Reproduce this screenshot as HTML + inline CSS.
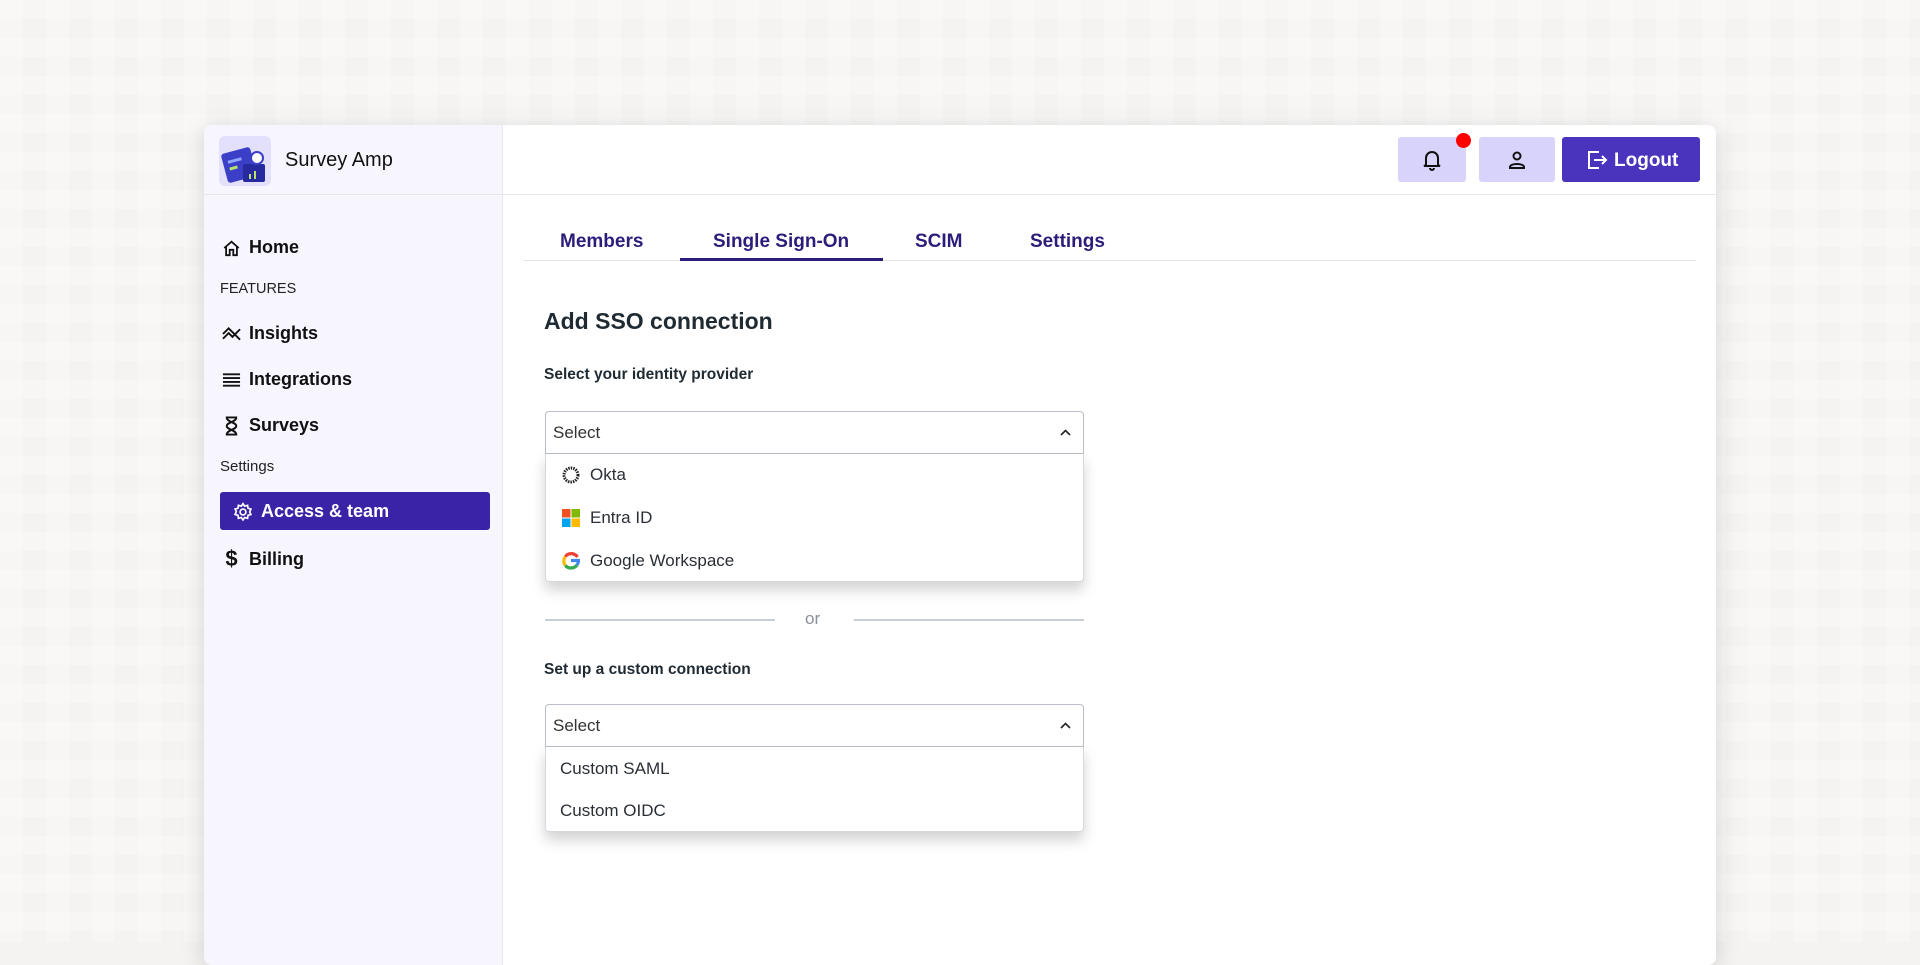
<!DOCTYPE html>
<html><head><meta charset="utf-8"><style>
*{box-sizing:border-box;margin:0;padding:0}
body{width:1920px;height:942px;overflow:hidden;background:#f5f3f1;font-family:"Liberation Sans",sans-serif;position:relative}
.bgrid{position:absolute;inset:0;background-image:linear-gradient(90deg,rgba(255,255,255,.5) 50%,transparent 50%),linear-gradient(rgba(255,255,255,.4) 50%,transparent 50%);background-size:46px 46px,38px 38px;opacity:.6}
.card{position:absolute;left:204px;top:125px;width:1512px;height:840px;background:#fff;border-radius:8px;box-shadow:0 4px 24px rgba(0,0,0,.15);overflow:hidden}
.side{position:absolute;left:0;top:0;width:299px;height:100%;background:#f7f6fe;border-right:1px solid #e8e6f2}
.hdr{position:absolute;left:0;top:69px;width:100%;height:1px;background:#e6e6ea}
.a{position:absolute;white-space:nowrap}
.nav{font-weight:bold;font-size:18px;color:#111;display:flex;align-items:center;gap:8px}
.cap{font-size:14.5px;color:#222}
.tab{font-weight:bold;font-size:19px;color:#2b1e7a}
.sel{position:absolute;left:341px;width:539px;border:1px solid #b9bec6;background:#fff;font-size:17px;color:#333}
.dd{position:absolute;left:341px;width:539px;background:#fff;border:1px solid #d5d8dd;border-top:none;border-radius:0 0 4px 4px;box-shadow:0 8px 14px rgba(0,0,0,.18)}
.it{position:absolute;font-size:17px;color:#2a2f36;display:flex;align-items:center;gap:10px}
</style></head><body>
<div class="bgrid"></div>
<div class="card">
 <div class="side"></div>
 <div class="hdr"></div>
 <div class="a" style="left:15px;top:11px;width:52px;height:50px;background:#e3e0fb;border-radius:6px"></div>
 <svg class="a" style="left:17px;top:15px" width="50" height="46" viewBox="0 0 50 46"><rect x="3" y="10" width="30" height="30" rx="3" fill="#3b3fc8" transform="rotate(-15 18 25)"/><rect x="8" y="18" width="14" height="3" fill="#8fa4ff" transform="rotate(-15 18 25)"/><rect x="8" y="25" width="8" height="3" fill="#b7e36a" transform="rotate(-15 18 25)"/><rect x="22" y="24" width="22" height="18" rx="2" fill="#262a9e"/><circle cx="36" cy="18" r="6" fill="#fff" stroke="#3b3fc8" stroke-width="2"/><rect x="28" y="34" width="2" height="5" fill="#b7e36a"/><rect x="33" y="31" width="2" height="8" fill="#b7e36a"/></svg>
 <div class="a" style="left:81px;top:24px;font-size:20px;color:#111">Survey Amp</div>
 <div class="a nav" style="left:18px;top:112px"><svg width="19" height="18" viewBox="0 0 20 20" fill="none" stroke="#111" stroke-width="2"><path d="M2 10L10 3l8 7M4 8v10h4v-6h4v6h4V8"/></svg>Home</div>
 <div class="a cap" style="left:16px;top:156px">FEATURES</div>
 <div class="a nav" style="left:18px;top:198px"><svg width="19" height="16" viewBox="0 0 20 16" fill="none" stroke="#111" stroke-width="2"><path d="M1 13l6-6 4 4 8-8M1 8l6-6 5 5 7 7"/></svg>Insights</div>
 <div class="a nav" style="left:18px;top:244px"><svg width="19" height="16" viewBox="0 0 20 16" fill="none" stroke="#111" stroke-width="2"><path d="M1 2h18M1 6h18M1 10h18M1 14h18"/></svg>Integrations</div>
 <div class="a nav" style="left:18px;top:290px"><svg width="19" height="20" viewBox="0 0 20 20" fill="none" stroke="#111" stroke-width="2"><path d="M4 1h12M4 19h12M5 1c0 5 10 5 10 9s-10 4-10 9M15 1c0 5-10 5-10 9s10 4 10 9"/></svg>Surveys</div>
 <div class="a cap" style="left:16px;top:333px;font-size:15px">Settings</div>
 <div class="a" style="left:16px;top:367px;width:270px;height:38px;background:#3a23a6;border-radius:3px"></div>
 <div class="a nav" style="left:29px;top:376px;color:#fff"><svg width="20" height="20" viewBox="0 0 24 24" fill="none" stroke="#fff" stroke-width="2"><circle cx="12" cy="12" r="3.5"/><path d="M12 2l2 3 3.5-1 .5 3.5 3.5 1-1.5 3.5 1.5 3-3.5 1-.5 3.5-3.5-1-2 3-2-3-3.5 1-.5-3.5-3.5-1 1.5-3.5L2.5 8.5 6 7.5 6.5 4 10 5z"/></svg>Access &amp; team</div>
 <div class="a nav" style="left:18px;top:421px"><span style="font-size:22px;width:19px;text-align:center">$</span>Billing</div>
 <div class="a" style="left:1194px;top:12px;width:68px;height:45px;background:#d8d3fb;border-radius:3px"></div>
 <svg class="a" style="left:1218px;top:24px" width="20" height="22" viewBox="0 0 20 22" fill="none" stroke="#111" stroke-width="2"><path d="M4 16V9a6 6 0 0112 0v7l2 1H2zM8 19a2 2 0 004 0"/></svg>
 <div class="a" style="left:1252px;top:8px;width:15px;height:15px;background:#f00;border-radius:50%"></div>
 <div class="a" style="left:1275px;top:12px;width:76px;height:45px;background:#d8d3fb;border-radius:3px"></div>
 <svg class="a" style="left:1304px;top:25px" width="18" height="20" viewBox="0 0 18 20" fill="none" stroke="#111" stroke-width="2"><circle cx="9" cy="6" r="3.5"/><path d="M2 17c0-4 14-4 14 0v1H2z"/></svg>
 <div class="a" style="left:1358px;top:12px;width:138px;height:45px;background:#4b34bd;border-radius:3px"></div>
 <svg class="a" style="left:1382px;top:24px" width="22" height="22" viewBox="0 0 22 22" fill="none" stroke="#fff" stroke-width="2"><path d="M13 3H3v16h10M8 11h12M16 7l4 4-4 4"/></svg>
 <div class="a" style="left:1410px;top:25px;font-weight:bold;font-size:19px;color:#fff">Logout</div>
 <div class="a" style="left:320px;top:135px;width:1172px;height:1px;background:#e3e3e6"></div>
 <div class="a" style="left:476px;top:133px;width:203px;height:3px;background:#2b1e7a"></div>
 <div class="a tab" style="left:356px;top:106px">Members</div>
 <div class="a tab" style="left:509px;top:106px">Single Sign-On</div>
 <div class="a tab" style="left:711px;top:106px">SCIM</div>
 <div class="a tab" style="left:826px;top:106px">Settings</div>
 <div class="a" style="left:340px;top:183px;font-size:23px;font-weight:bold;color:#1f2a33">Add SSO connection</div>
 <div class="a" style="left:340px;top:241px;font-size:15.5px;font-weight:bold;color:#1f2a33">Select your identity provider</div>
 <div class="sel" style="top:286px;height:43px;border-radius:4px 4px 0 0"><span class="a" style="left:7px;top:11px">Select</span><svg class="a" style="right:12px;top:17px" width="11" height="7" viewBox="0 0 11 7" fill="none" stroke="#222" stroke-width="1.6"><path d="M1 6l4.5-4.5L10 6"/></svg></div>
 <div class="dd" style="top:329px;height:128px"></div>
 <div class="it" style="left:358px;top:340px"><svg width="18" height="18" viewBox="0 0 18 18"><circle cx="9" cy="9" r="7" fill="none" stroke="#222" stroke-width="3" stroke-dasharray="1.5 1"/><circle cx="9" cy="9" r="4" fill="#fff"/></svg>Okta</div>
 <div class="it" style="left:358px;top:383px"><svg width="18" height="18" viewBox="0 0 18 18"><rect x="0" y="0" width="8.5" height="8.5" fill="#f25022"/><rect x="9.5" y="0" width="8.5" height="8.5" fill="#7fba00"/><rect x="0" y="9.5" width="8.5" height="8.5" fill="#00a4ef"/><rect x="9.5" y="9.5" width="8.5" height="8.5" fill="#ffb900"/></svg>Entra ID</div>
 <div class="it" style="left:358px;top:426px"><svg width="18" height="18" viewBox="0 0 18 18" fill="none" stroke-width="3.2"><path d="M15.5 5A7.5 7.5 0 003.3 4.6" stroke="#ea4335"/><path d="M3.3 4.6a7.5 7.5 0 000 8.8" stroke="#fbbc05"/><path d="M3.3 13.4A7.5 7.5 0 0015 13" stroke="#34a853"/><path d="M15 13a7.5 7.5 0 001.5-4.5H9" stroke="#4285f4"/></svg>Google Workspace</div>
 <div class="a" style="left:341px;top:494px;width:230px;height:2px;background:#c9ced4"></div>
 <div class="a" style="left:650px;top:494px;width:230px;height:2px;background:#c9ced4"></div>
 <div class="a" style="left:601px;top:484px;font-size:17px;color:#8a919a">or</div>
 <div class="a" style="left:340px;top:536px;font-size:15.5px;font-weight:bold;color:#1f2a33">Set up a custom connection</div>
 <div class="sel" style="top:579px;height:43px;border-radius:4px 4px 0 0"><span class="a" style="left:7px;top:11px">Select</span><svg class="a" style="right:12px;top:17px" width="11" height="7" viewBox="0 0 11 7" fill="none" stroke="#222" stroke-width="1.6"><path d="M1 6l4.5-4.5L10 6"/></svg></div>
 <div class="dd" style="top:622px;height:85px"></div>
 <div class="it" style="left:356px;top:634px">Custom SAML</div>
 <div class="it" style="left:356px;top:676px">Custom OIDC</div>
</div>
</body></html>
